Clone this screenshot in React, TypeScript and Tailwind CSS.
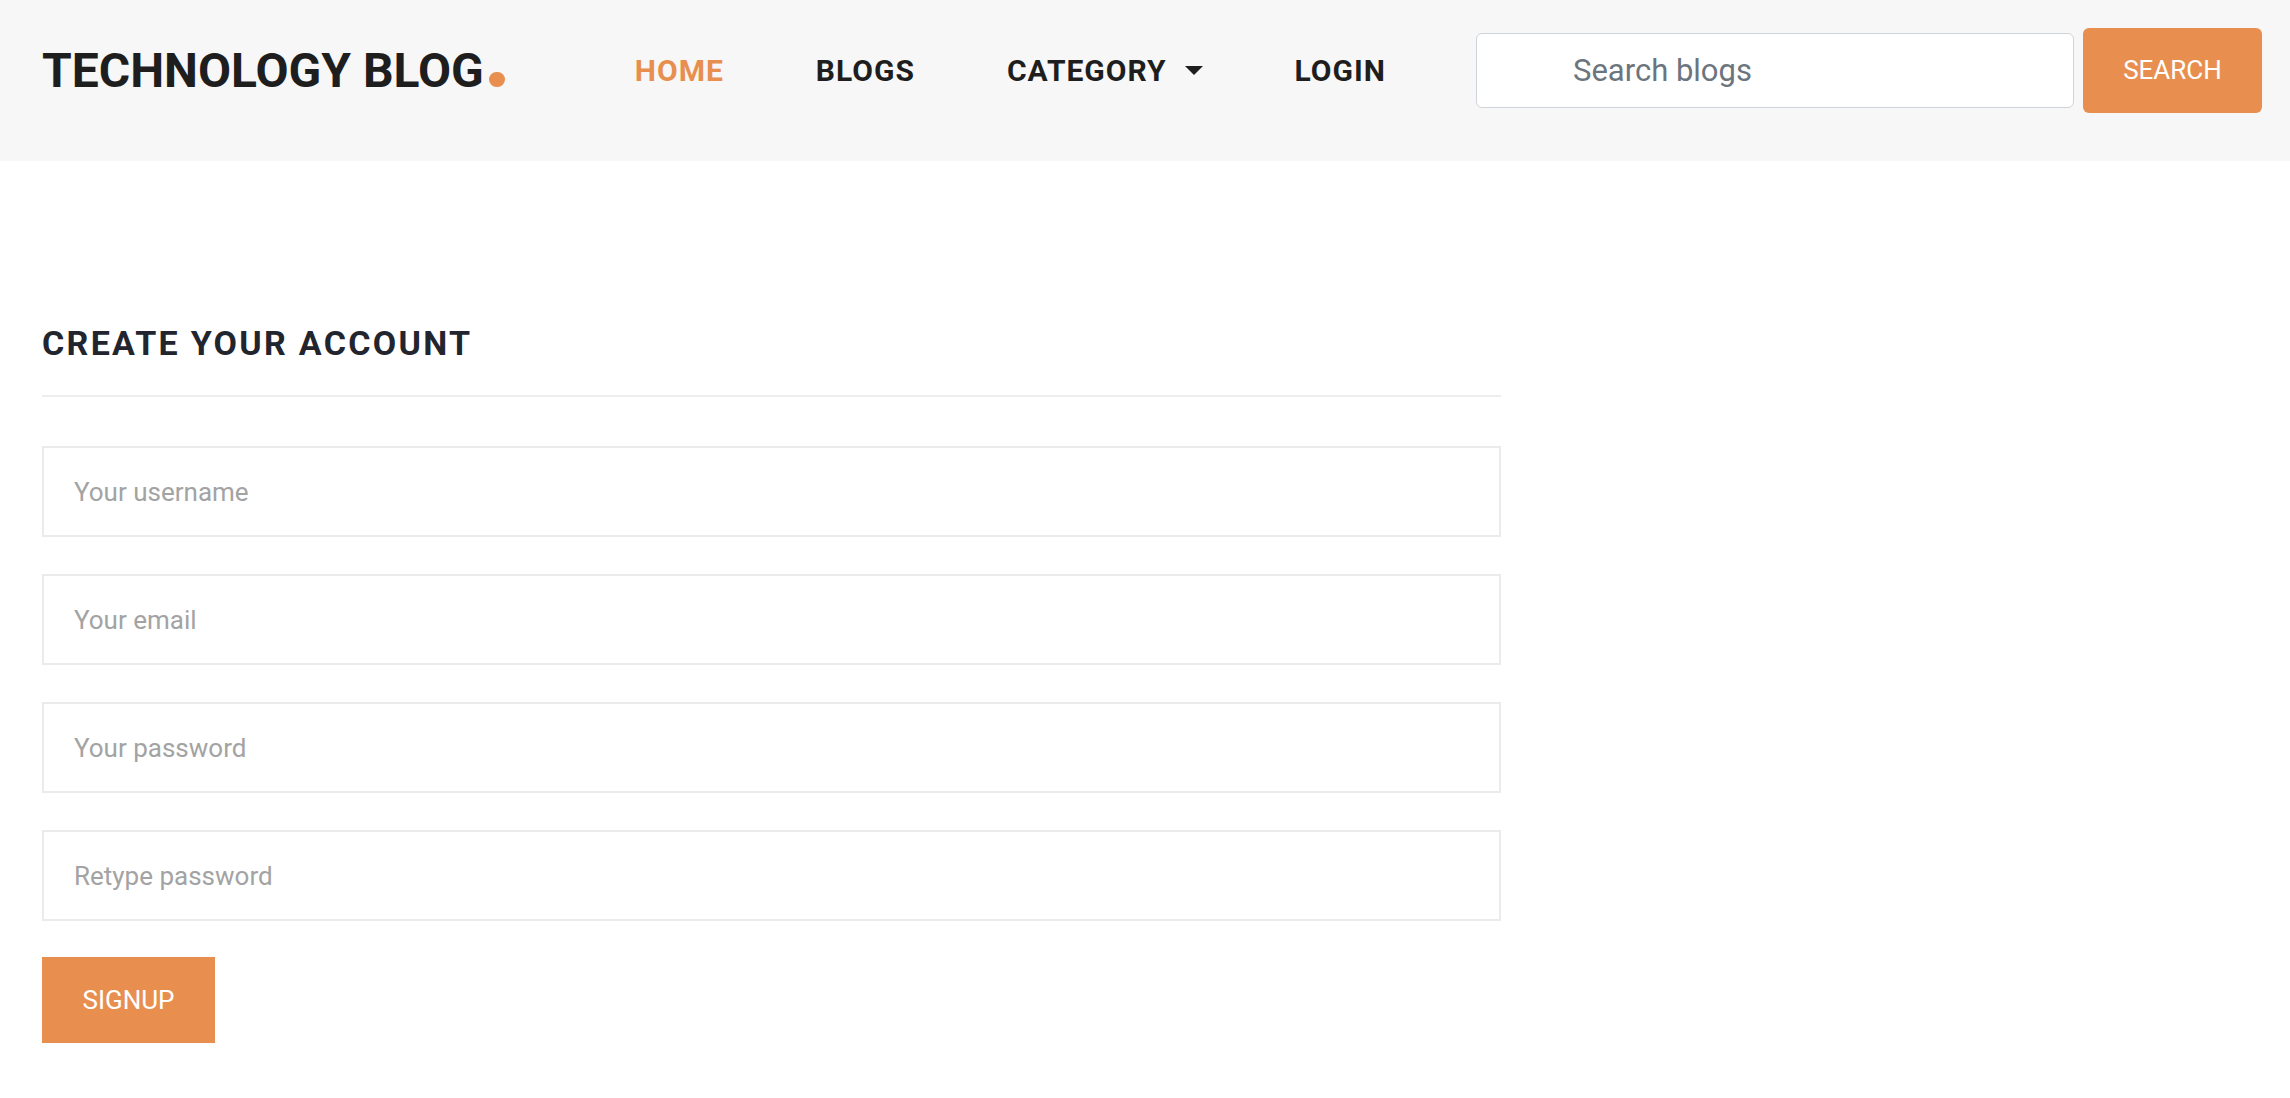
import React from 'react'

const navLinks = [
  { label: 'HOME', active: true },
  { label: 'BLOGS' },
  { label: 'CATEGORY', dropdown: true },
  { label: 'LOGIN' },
]

const fields = [
  { placeholder: 'Your username', type: 'text' },
  { placeholder: 'Your email', type: 'email' },
  { placeholder: 'Your password', type: 'password' },
  { placeholder: 'Retype password', type: 'password' },
]

function Header() {
  return (
    <header className="flex items-center bg-[#f7f7f7] pl-[42px] pr-[28px] pt-[28px] pb-[48px]">
      {/* Logo */}
      <a href="#" className="flex items-baseline text-[48px] font-bold leading-none text-[#1e1e1e]">
        TECHNOLOGY BLOG
        <span className="ml-[5px] inline-block h-[15px] w-[16px] rounded-full bg-[#e88f4f]" />
      </a>

      {/* Nav */}
      <nav className="ml-[130px] flex items-center gap-[92px]">
        {navLinks.map((link) => (
          <a
            key={link.label}
            href="#"
            className={`flex items-center text-[30px] font-bold tracking-[1px] leading-none
              ${link.active ? 'text-[#e88f4f]' : 'text-[#1e1e1e]'}`}
          >
            {link.label}
            {link.dropdown && (
              <span className="ml-[18px] inline-block h-0 w-0 border-x-[9px] border-t-[9px] border-x-transparent border-t-[#1e1e1e]" />
            )}
          </a>
        ))}
      </nav>

      {/* Search */}
      <form className="ml-auto flex items-center" onSubmit={(e) => e.preventDefault()}>
        <input
          type="text"
          placeholder="Search blogs"
          className="h-[75px] w-[598px] rounded-[6px] border border-[#ced4da] bg-white pl-[96px] text-[31px] text-[#495057] outline-none placeholder:text-[#6c757d]"
        />
        <button
          type="submit"
          className="ml-[9px] h-[85px] w-[179px] rounded-[6px] bg-[#e88f4f] text-[26px] text-white"
        >
          SEARCH
        </button>
      </form>
    </header>
  )
}

function SignupForm() {
  return (
    <section className="w-[1459px] pl-[42px] pt-[157px] box-content">
      <h2 className="text-[34px] font-bold tracking-[2.3px] text-[#22252e]">CREATE YOUR ACCOUNT</h2>
      <div className="mt-[26px] border-t-2 border-[#eeeeee]" />

      <form className="mt-[49px] flex flex-col gap-[37px]" onSubmit={(e) => e.preventDefault()}>
        {fields.map((f) => (
          <input
            key={f.placeholder}
            type={f.type}
            placeholder={f.placeholder}
            className="h-[91px] w-full border-2 border-[#ebebeb] bg-white px-[30px] text-[26px] text-[#555] outline-none placeholder:text-[#a3a3a3]"
          />
        ))}
        <div>
          <button
            type="submit"
            className="-mt-[1px] h-[86px] w-[173px] bg-[#e88f4f] text-[26px] text-white"
          >
            SIGNUP
          </button>
        </div>
      </form>
    </section>
  )
}

export default function App() {
  return (
    <div className="min-h-[1098px] bg-white font-['Roboto',sans-serif]">
      <Header />
      <SignupForm />
    </div>
  )
}
